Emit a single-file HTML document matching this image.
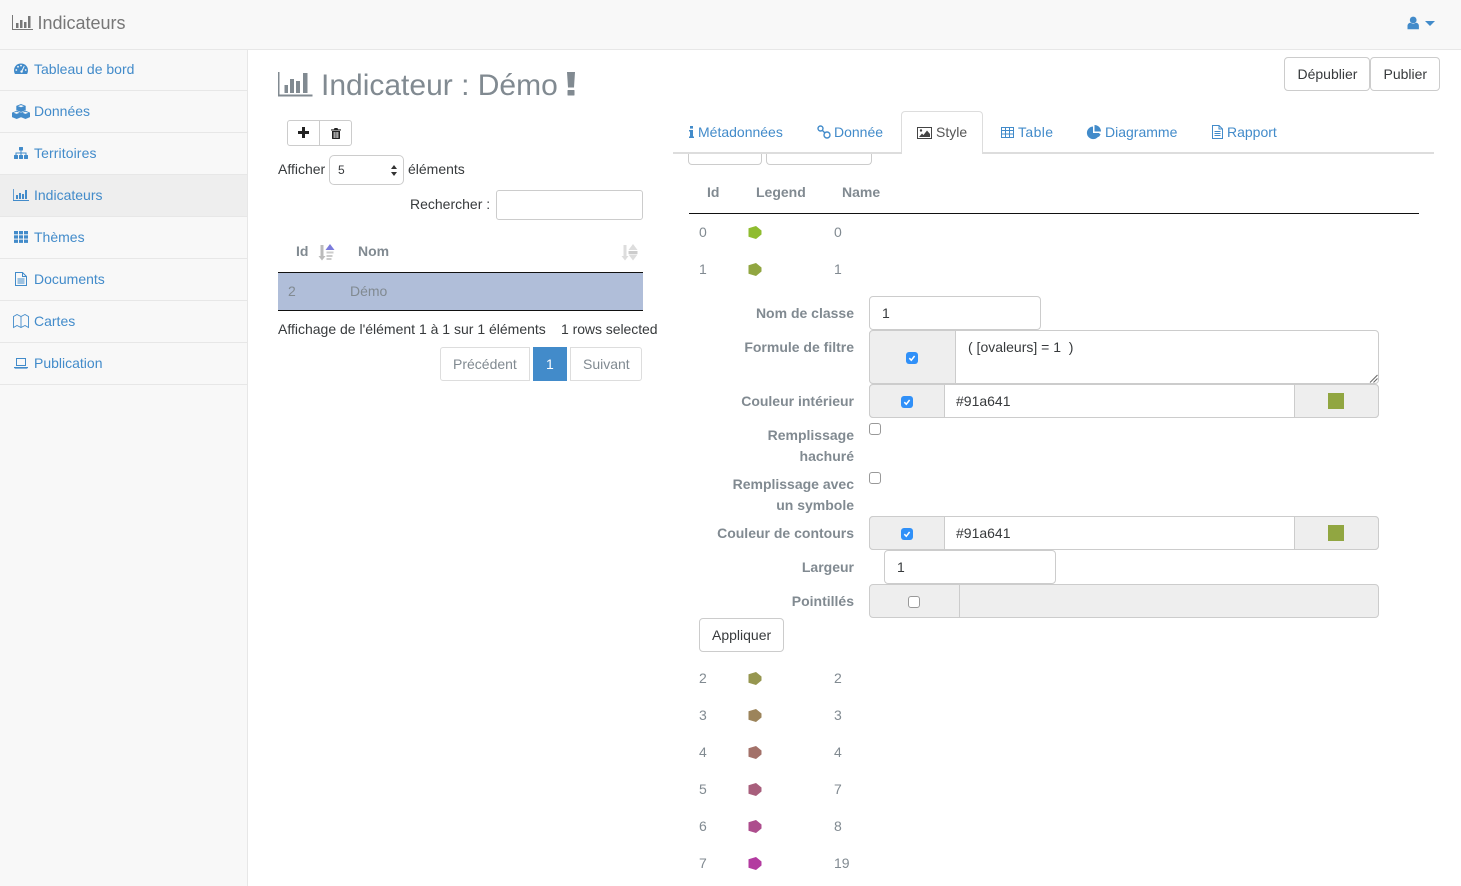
<!DOCTYPE html>
<html><head><meta charset="utf-8"><title>Indicateurs</title>
<style>
html,body{margin:0;padding:0;width:1461px;height:886px;overflow:hidden;background:#fff;font-family:"Liberation Sans",Arial,sans-serif;font-size:14px;color:#373a3c}
.a{position:absolute;white-space:nowrap}
.t{position:absolute;white-space:nowrap;line-height:20px;height:20px}
.r{text-align:right}
.b{font-weight:bold;color:#818a91}
.g{color:#818a91}
.l{color:#428bca}
.box{position:absolute;box-sizing:border-box;border:1px solid #ccc;background:#fff;border-radius:4px}
.add{position:absolute;box-sizing:border-box;border:1px solid #ccc;background:#eee}
.sep{position:absolute;left:0;width:247px;height:1px;background:#e7e7e7}
svg{position:absolute;display:block;overflow:visible}
.cb{position:absolute;box-sizing:border-box;width:12px;height:12px;border-radius:3px;background:#3090f8}
.cu{position:absolute;box-sizing:border-box;width:12px;height:12px;border-radius:3px;background:#fff;border:1px solid #999}
</style></head><body>
<div class="a" style="left:0;top:0;width:1461px;height:49px;background:#f8f8f8"></div>
<div class="a" style="left:0;top:49px;width:1461px;height:1px;background:#e7e7e7"></div>
<div class="a" style="left:0;top:50px;width:247px;height:836px;background:#f8f8f8"></div>
<div class="a" style="left:247px;top:50px;width:1px;height:836px;background:#e7e7e7"></div>

<svg style="left:12px;top:15px" width="21" height="16" viewBox="0 0 21 16" fill="#777"><path d="M0 0h1v14h20v1H0z"/><rect x="4" y="8" width="2.500" height="5"/><rect x="8" y="5" width="2.500" height="8"/><rect x="12" y="7" width="2.500" height="6"/><rect x="16" y="1" width="2.500" height="12"/></svg>
<div class="a" style="left:37.500px;top:12px;font-size:18px;line-height:22px;color:#777">Indicateurs</div>
<svg style="left:1407px;top:16px" width="13" height="14" viewBox="0 0 13 14" fill="#428bca"><circle cx="6.200" cy="4" r="3.400"/><path d="M0.500 13.200V10c0-2 1.600-3.200 3-3.200l2.700 1.200 2.700-1.200c1.600 0 3 1.200 3 3.200v3.200z"/></svg>
<svg style="left:1425px;top:21px" width="10" height="5" viewBox="0 0 10 5" fill="#428bca"><path d="M0 0h10L5 5z"/></svg>

<div class="a" style="left:0;top:175px;width:247px;height:41px;background:#eee"></div>
<div class="sep" style="top:90px"></div><div class="sep" style="top:132px"></div><div class="sep" style="top:174px"></div><div class="sep" style="top:216px"></div><div class="sep" style="top:258px"></div><div class="sep" style="top:300px"></div><div class="sep" style="top:342px"></div><div class="sep" style="top:384px"></div>

<div class="t l" style="left:34px;top:59px">Tableau de bord</div>
<div class="t l" style="left:34px;top:101px">Données</div>
<div class="t l" style="left:34px;top:143px;letter-spacing:.1px">Territoires</div>
<div class="t l" style="left:34px;top:185px">Indicateurs</div>
<div class="t l" style="left:34px;top:227px">Thèmes</div>
<div class="t l" style="left:34px;top:269px">Documents</div>
<div class="t l" style="left:34px;top:311px">Cartes</div>
<div class="t l" style="left:34px;top:353px">Publication</div>

<svg style="left:14px;top:63px" width="14" height="12" viewBox="0 0 14 12" fill="#428bca"><path d="M7 .5C3 .5 0 3.600 0 7.400c0 1.400.4 2.600 1 3.600h12c.6-1 1-2.200 1-3.600C14 3.600 11 .5 7 .5z"/><g fill="#f8f8f8"><circle cx="2.300" cy="7" r=".9"/><circle cx="4" cy="3.800" r=".9"/><circle cx="7" cy="2.600" r=".9"/><circle cx="11.700" cy="7" r=".9"/><path d="M9.800 3l.9.4-2.300 4.800-.9-.4z"/><circle cx="7.600" cy="8.600" r="1.200"/></g></svg>
<svg style="left:12px;top:104px" width="18" height="15" viewBox="0 0 18 15" fill="#428bca"><path d="M9 0l4.700 1.900v4.400L9 8 4.300 6.300V1.900z"/><path d="M4.700 6.800L9.200 8.600v4.500L4.700 15 0 13.100V8.600z"/><path d="M13.500 6.800L18 8.600v4.500L13.500 15 8.800 13.100V8.600z"/><path fill="#f8f8f8" d="M6 2.100l3 1.200 3-1.200-3-1zM1.600 8.700l3 1.200 3-1.200-3-1zM10.400 8.700l3 1.200 3-1.200-3-1z"/></svg>
<svg style="left:14px;top:147px" width="14" height="12" viewBox="0 0 14 12" fill="#428bca"><rect x="5" y="0" width="4" height="3.500" rx=".5"/><rect x="0" y="8" width="4" height="4" rx=".5"/><rect x="5" y="8" width="4" height="4" rx=".5"/><rect x="10" y="8" width="4" height="4" rx=".5"/><path d="M6.500 3.500h1V5.500H12.500V8h-1V6.500h-4V8h-1V6.500h-4V8h-1V5.500h5z"/></svg>
<svg style="left:13px;top:189px" width="16" height="12" viewBox="0 0 16 12" fill="#428bca"><path d="M0 0h.8v11H16v1H0z"/><rect x="3" y="6" width="2" height="4"/><rect x="6" y="4" width="2" height="6"/><rect x="9" y="5" width="2" height="5"/><rect x="12" y="1" width="2" height="9"/></svg>
<svg style="left:14px;top:231px" width="14" height="12" viewBox="0 0 14 12" fill="#428bca"><rect x="0" y="0" width="4" height="3.300"/><rect x="5" y="0" width="4" height="3.300"/><rect x="10" y="0" width="4" height="3.300"/><rect x="0" y="4.300" width="4" height="3.300"/><rect x="5" y="4.300" width="4" height="3.300"/><rect x="10" y="4.300" width="4" height="3.300"/><rect x="0" y="8.600" width="4" height="3.300"/><rect x="5" y="8.600" width="4" height="3.300"/><rect x="10" y="8.600" width="4" height="3.300"/></svg>
<svg style="left:15px;top:272px" width="12" height="14" viewBox="0 0 12 14" fill="none" stroke="#428bca"><path d="M.5.500h7l4 4v9H.5z"/><path d="M7.500.500v4h4M2.500 7h7M2.500 9h7M2.500 11h7"/></svg>
<svg style="left:13px;top:314px" width="16" height="14" viewBox="0 0 16 14" fill="none" stroke="#428bca" stroke-width=".9"><path d="M.5 2.500l3.500-2 4 2 4-2 3.500 2v11l-3.500-2-4 2-4-2-3.500 2zM8 2.500v11"/></svg>
<svg style="left:14px;top:358px" width="14" height="11" viewBox="0 0 14 11" fill="#428bca"><path fill="none" stroke="#428bca" d="M2.500.5h9v7h-9z"/><path d="M0 9h14v.6l-1 1H1l-1-1z"/></svg>

<!-- Title -->
<svg style="left:278px;top:72px" width="35" height="25" viewBox="0 0 35 25" fill="#818a91"><path d="M0 0h1.500v22.500H34.500V24.500H0z"/><rect x="6.500" y="13" width="3.500" height="8"/><rect x="12" y="7" width="4" height="14"/><rect x="18" y="9" width="4" height="12"/><rect x="25" y="1" width="4.500" height="20"/></svg>
<div class="a" style="left:321px;top:68px;font-size:30px;line-height:36px;color:#818a91">Indicateur : Démo</div>
<svg style="left:566px;top:72px" width="10" height="24" viewBox="0 0 10 24" fill="#818a91"><path d="M1 0h8l-1 15.500H2z"/><rect x="1.500" y="18" width="7" height="5.500" rx=".5"/></svg>

<div class="box" style="left:1284px;top:57px;width:86px;height:34px"></div>
<div class="t" style="left:1297.500px;top:64px">Dépublier</div>
<div class="box" style="left:1370px;top:57px;width:70px;height:34px"></div>
<div class="t" style="left:1383.500px;top:64px">Publier</div>

<!-- Left table area -->
<div class="box" style="left:287px;top:120px;width:65px;height:26px;border-radius:3px"></div>
<div class="a" style="left:319px;top:120px;width:1px;height:26px;background:#ccc"></div>
<svg style="left:298px;top:127px" width="11" height="11" viewBox="0 0 11 11" fill="#222"><path d="M4 0h3v4h4v3H7v4H4V7H0V4h4z"/></svg>
<svg style="left:330.500px;top:127.500px" width="10" height="11" viewBox="0 0 10 11" fill="#222"><path d="M3.500 0h3l.6 1.400H10v1.100H0V1.400h2.900z"/><path fill-rule="evenodd" d="M1 3h8v7.200c0 .5-.3.800-.8.800H1.800c-.5 0-.8-.3-.8-.8zM2.700 4v6h.9V4zM4.600 4v6h.9V4zM6.400 4v6h.9V4z"/></svg>

<div class="t" style="left:278px;top:159px">Afficher</div>
<div class="box" style="left:329px;top:155px;width:75px;height:30px;border-radius:5px"></div>
<div class="t" style="left:338px;top:160px;font-size:12px">5</div>
<svg style="left:391px;top:165px" width="6" height="11" viewBox="0 0 6 11" fill="#333"><path d="M3 0l3 4H0zM3 11L0 7h6z"/></svg>
<div class="t" style="left:408px;top:159px">éléments</div>
<div class="t" style="left:410px;top:194px">Rechercher :</div>
<div class="box" style="left:496px;top:190px;width:147px;height:30px;border-radius:3px"></div>

<div class="t b" style="left:296px;top:241px">Id</div>
<svg style="left:318px;top:244px" width="17" height="17" viewBox="0 0 17 17"><path fill="#bbb" d="M2.500 1h3v11h2l-3.500 4.500L.5 12h2z"/><path fill="#7b7bdc" d="M12 0l4.500 6h-9z"/><path fill="#ccc" d="M8.500 7.500h7v2h-7zM8.500 11h6v2h-6zM8.500 14h5v2h-5z"/></svg>
<div class="t b" style="left:358px;top:241px">Nom</div>
<svg style="left:621px;top:244px" width="17" height="17" viewBox="0 0 17 17" fill="#ddd"><path d="M2.500 1h3v11h2l-3.500 4.500L.5 12h2z"/><path d="M12 0l4.500 6h-9zM12 16.500l-4.500-6h9z"/><path fill="#ccc" d="M7.500 7h9v3h-9z"/></svg>

<div class="a" style="left:278px;top:272px;width:365px;height:39px;background:#b0bed9"></div>
<div class="a" style="left:278px;top:272px;width:365px;height:1px;background:#111"></div>
<div class="a" style="left:278px;top:310px;width:365px;height:1px;background:#111"></div>
<div class="t g" style="left:288px;top:281px">2</div>
<div class="t g" style="left:350px;top:281px">Démo</div>

<div class="t" style="left:278px;top:319px">Affichage de l'élément 1 à 1 sur 1 éléments</div>
<div class="t" style="left:561px;top:319px;letter-spacing:-.05px">1 rows selected</div>

<div class="box" style="left:440px;top:347px;width:90px;height:34px;border-color:#ddd;border-radius:3px 0 0 3px"></div>
<div class="t g" style="left:453px;top:354px">Précédent</div>
<div class="a" style="left:533px;top:347px;width:34px;height:34px;background:#428bca"></div>
<div class="t" style="left:546px;top:354px;color:#fff">1</div>
<div class="box" style="left:570px;top:347px;width:72px;height:34px;border-color:#ddd;border-radius:0 3px 3px 0"></div>
<div class="t g" style="left:583px;top:354px">Suivant</div>

<!-- Tabs -->
<div class="a" style="left:673px;top:152px;width:761px;height:2px;background:#ddd"></div>
<div class="a" style="left:901px;top:111px;width:82px;height:43px;box-sizing:border-box;background:#fff;border:1px solid #ddd;border-bottom:0;border-radius:4px 4px 0 0"></div>

<div class="t l" style="left:698px;top:122px">Métadonnées</div>
<div class="t l" style="left:834px;top:122px">Donnée</div>
<div class="t" style="left:936px;top:122px;color:#555">Style</div>
<div class="t l" style="left:1018px;top:122px;letter-spacing:.4px">Table</div>
<div class="t l" style="left:1105px;top:122px">Diagramme</div>
<div class="t l" style="left:1227px;top:122px">Rapport</div>

<svg style="left:689px;top:126px" width="5" height="12" viewBox="0 0 5 12" fill="#428bca"><rect x="1" y="0" width="3" height="2.600"/><path d="M0 4h4v6.500h1V12H0v-1.500h1V5.500H0z"/></svg>
<svg style="left:817px;top:125px" width="14" height="14" viewBox="0 0 14 14" fill="none" stroke="#428bca" stroke-width="1.400"><circle cx="3.500" cy="3.500" r="2.500"/><circle cx="10" cy="10" r="3"/><path d="M5.500 5.500l2.200 2.200"/></svg>
<svg style="left:917px;top:127px" width="15" height="12" viewBox="0 0 15 12"><rect x=".5" y=".5" width="14" height="11" fill="#fff" stroke="#444"/><path fill="#444" d="M2 10l3-3.500 1.500 1.500 3.500-4.500 3 3.500V10z"/><circle cx="4" cy="3.500" r="1.200" fill="#444"/></svg>
<svg style="left:1001px;top:127px" width="13" height="11" viewBox="0 0 13 11" fill="none" stroke="#428bca"><path d="M.5.500h12v10H.5zM.5 3.500h12M.5 7h12M4.500 .5v10M8.500.5v10"/></svg>
<svg style="left:1087px;top:125px" width="14" height="14" viewBox="0 0 14 14" fill="#428bca"><path d="M6 1.500V8h6.500A6.300 6.300 0 1 1 6 1.500z"/><path d="M7.500 0a6.500 6.500 0 0 1 6.500 6.500H7.500z"/><path d="M8 9h5.500c-.3 1.200-1 2.200-1.800 3z"/></svg>
<svg style="left:1212px;top:125px" width="11" height="14" viewBox="0 0 11 14" fill="none" stroke="#428bca"><path d="M.5.500h6.500l3.500 3.500v9.500H.5z"/><path d="M7 .5V4h3.500M2.500 6.500h6M2.500 8.500h6M2.500 10.500h6"/></svg>

<!-- clipped buttons beneath tabs -->
<div class="a" style="left:688px;top:154px;width:74px;height:11px;box-sizing:border-box;border:1px solid #ccc;border-top:0;border-radius:0 0 4px 4px"></div>
<div class="a" style="left:766px;top:154px;width:106px;height:11px;box-sizing:border-box;border:1px solid #ccc;border-top:0;border-radius:0 0 4px 4px"></div>

<!-- Legend table -->
<div class="t b" style="left:707px;top:182px">Id</div>
<div class="t b" style="left:756px;top:182px">Legend</div>
<div class="t b" style="left:842px;top:182px">Name</div>
<div class="a" style="left:689px;top:213px;width:730px;height:1px;background:#111"></div>

<div class="t g" style="left:699px;top:222px">0</div><div class="t g" style="left:834px;top:222px">0</div>
<svg style="left:748px;top:226px" width="14" height="13" viewBox="0 0 13 13"><path fill="#8fbc2f" d="M0 2.200L7.500 0 13 4.500v4L7.500 13 0 10.800z"/></svg>
<div class="t g" style="left:699px;top:259px">1</div><div class="t g" style="left:834px;top:259px">1</div>
<svg style="left:748px;top:263px" width="14" height="13" viewBox="0 0 13 13"><path fill="#91a641" d="M0 2.200L7.500 0 13 4.500v4L7.500 13 0 10.800z"/></svg>

<!-- Form -->
<div class="t b r" style="left:689px;width:165px;top:303px">Nom de classe</div>
<div class="box" style="left:869px;top:296px;width:172px;height:34px"></div>
<div class="t" style="left:882px;top:303px">1</div>

<div class="t b r" style="left:689px;width:165px;top:337px">Formule de filtre</div>
<div class="box" style="left:869px;top:330px;width:510px;height:54px"></div>
<div class="add" style="left:869px;top:330px;width:87px;height:54px;border-radius:4px 0 0 4px"></div>
<div class="cb" style="left:906px;top:352px"></div>
<svg style="left:906px;top:352px" width="12" height="12" viewBox="0 0 12 12" fill="none" stroke="#fff" stroke-width="1.500"><path d="M3.300 6.200l2 2 3.300-4.200"/></svg>
<div class="t" style="left:968px;top:337px">( [ovaleurs] = 1&nbsp; )</div>
<svg style="left:1370px;top:374px" width="8" height="9" viewBox="0 0 8 9" stroke="#666" stroke-width="1"><path d="M0 8.500L7.500 1M3.500 8.500L7.500 4.500"/></svg>

<div class="t b r" style="left:689px;width:165px;top:391px">Couleur intérieur</div>
<div class="box" style="left:869px;top:384px;width:510px;height:34px"></div>
<div class="add" style="left:869px;top:384px;width:76px;height:34px;border-radius:4px 0 0 4px"></div>
<div class="add" style="left:1294px;top:384px;width:85px;height:34px;border-radius:0 4px 4px 0"></div>
<div class="cb" style="left:901px;top:396px"></div>
<svg style="left:901px;top:396px" width="12" height="12" viewBox="0 0 12 12" fill="none" stroke="#fff" stroke-width="1.500"><path d="M3.300 6.200l2 2 3.300-4.200"/></svg>
<div class="t" style="left:956px;top:391px">#91a641</div>
<div class="a" style="left:1328px;top:393px;width:16px;height:16px;background:#91a641"></div>

<div class="t b r" style="left:689px;width:165px;top:425px">Remplissage</div>
<div class="t b r" style="left:689px;width:165px;top:446px">hachuré</div>
<div class="cu" style="left:869px;top:423px"></div>
<div class="t b r" style="left:689px;width:165px;top:474px">Remplissage avec</div>
<div class="t b r" style="left:689px;width:165px;top:495px">un symbole</div>
<div class="cu" style="left:869px;top:472px"></div>

<div class="t b r" style="left:689px;width:165px;top:523px">Couleur de contours</div>
<div class="box" style="left:869px;top:516px;width:510px;height:34px"></div>
<div class="add" style="left:869px;top:516px;width:76px;height:34px;border-radius:4px 0 0 4px"></div>
<div class="add" style="left:1294px;top:516px;width:85px;height:34px;border-radius:0 4px 4px 0"></div>
<div class="cb" style="left:901px;top:528px"></div>
<svg style="left:901px;top:528px" width="12" height="12" viewBox="0 0 12 12" fill="none" stroke="#fff" stroke-width="1.500"><path d="M3.300 6.200l2 2 3.300-4.200"/></svg>
<div class="t" style="left:956px;top:523px">#91a641</div>
<div class="a" style="left:1328px;top:525px;width:16px;height:16px;background:#91a641"></div>

<div class="t b r" style="left:689px;width:165px;top:557px">Largeur</div>
<div class="box" style="left:884px;top:550px;width:172px;height:34px"></div>
<div class="t" style="left:897px;top:557px">1</div>

<div class="t b r" style="left:689px;width:165px;top:591px">Pointillés</div>
<div class="add" style="left:869px;top:584px;width:510px;height:34px;border-radius:4px"></div>
<div class="a" style="left:959px;top:584px;width:1px;height:34px;background:#ccc"></div>
<div class="cu" style="left:908px;top:596px"></div>

<div class="box" style="left:699px;top:618px;width:85px;height:34px"></div>
<div class="t" style="left:712px;top:625px">Appliquer</div>

<div class="t g" style="left:699px;top:668px">2</div><div class="t g" style="left:834px;top:668px">2</div>
<svg style="left:748px;top:672px" width="14" height="13" viewBox="0 0 13 13"><path fill="#96964f" d="M0 2.200L7.500 0 13 4.500v4L7.500 13 0 10.800z"/></svg>
<div class="t g" style="left:699px;top:705px">3</div><div class="t g" style="left:834px;top:705px">3</div>
<svg style="left:748px;top:709px" width="14" height="13" viewBox="0 0 13 13"><path fill="#9c845b" d="M0 2.200L7.500 0 13 4.500v4L7.500 13 0 10.800z"/></svg>
<div class="t g" style="left:699px;top:742px">4</div><div class="t g" style="left:834px;top:742px">4</div>
<svg style="left:748px;top:746px" width="14" height="13" viewBox="0 0 13 13"><path fill="#a37169" d="M0 2.200L7.500 0 13 4.500v4L7.500 13 0 10.800z"/></svg>
<div class="t g" style="left:699px;top:779px">5</div><div class="t g" style="left:834px;top:779px">7</div>
<svg style="left:748px;top:783px" width="14" height="13" viewBox="0 0 13 13"><path fill="#a85f7c" d="M0 2.200L7.500 0 13 4.500v4L7.500 13 0 10.800z"/></svg>
<div class="t g" style="left:699px;top:816px">6</div><div class="t g" style="left:834px;top:816px">8</div>
<svg style="left:748px;top:820px" width="14" height="13" viewBox="0 0 13 13"><path fill="#ad4d8d" d="M0 2.200L7.500 0 13 4.500v4L7.500 13 0 10.800z"/></svg>
<div class="t g" style="left:699px;top:853px">7</div><div class="t g" style="left:834px;top:853px">19</div>
<svg style="left:748px;top:857px" width="14" height="13" viewBox="0 0 13 13"><path fill="#b33ba0" d="M0 2.200L7.500 0 13 4.500v4L7.500 13 0 10.800z"/></svg>
</body></html>
